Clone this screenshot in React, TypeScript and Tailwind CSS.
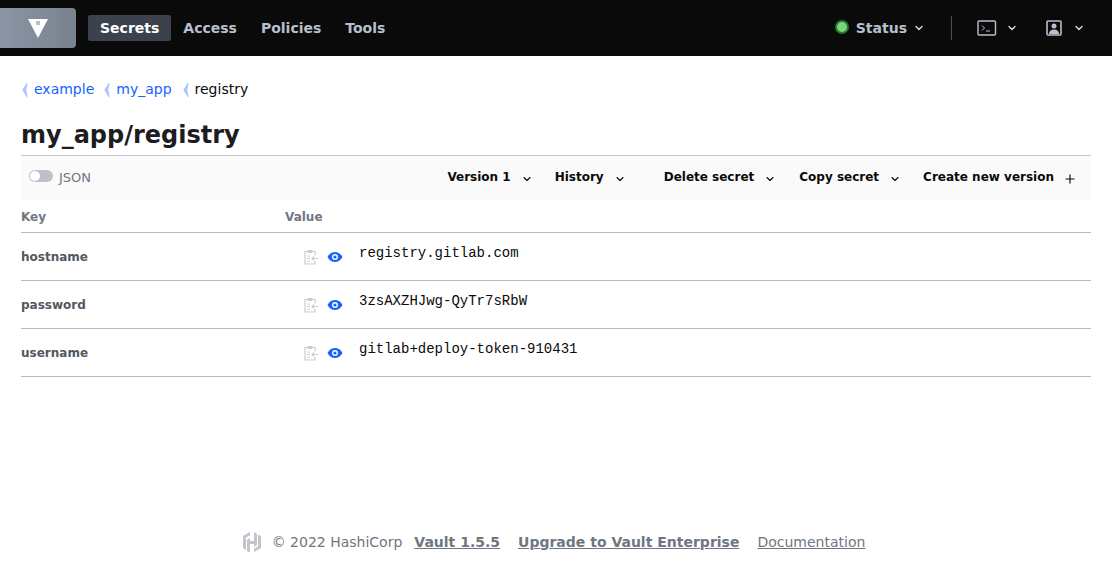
import React from "react";
import { ChevronDown, Plus } from "lucide-react";

const secrets = [
  { key: "hostname", value: "registry.gitlab.com" },
  { key: "password", value: "3zsAXZHJwg-QyTr7sRbW" },
  { key: "username", value: "gitlab+deploy-token-910431" },
];

const Crumb = () => (
  <svg width="8" height="16" viewBox="0 0 8 16" className="mr-[5px] mt-[2px] shrink-0">
    <path d="M6 1.500 L2 8 L6 14.500 L4.500 8 Z" fill="#a8c6fb" stroke="#a8c6fb" strokeWidth="1.200" strokeLinejoin="round" />
  </svg>
);

const ClipboardIcon = () => (
  <svg width="16" height="16" viewBox="0 0 16 16" fill="none" stroke="#c9ccd3" strokeWidth="1.200">
    <path d="M4.500 2.500H2v12.500h10v-3M12 6.500v-4H9.500" />
    <rect x="4.500" y="1" width="5" height="3" fill="#c9ccd3" stroke="none" />
    <path d="M4 7h3M4 9.500h3M4 12h3M9 9.500h6M11 7.500l-2 2 2 2" />
  </svg>
);

const EyeIcon = () => (
  <svg width="16" height="12" viewBox="0 0 16 12">
    <path d="M0.500 6C2.400 2.800 5 1 8 1s5.600 1.800 7.500 5c-1.900 3.200-4.500 5-7.500 5S2.400 9.200 0.500 6z" fill="#1563ff" />
    <circle cx="8" cy="6" r="3" fill="#fff" />
    <circle cx="8" cy="6" r="1.600" fill="#1563ff" />
  </svg>
);

const ToolbarAction = ({ label, className }: { label: string; className?: string }) => (
  <div className={`flex items-center text-xs font-bold text-[#0a0a0a] ${className ?? ""}`}>
    <span>{label}</span>
    <ChevronDown size={12} strokeWidth={2.2} className="ml-[10px] mt-[3px]" />
  </div>
);

export default function App() {
  return (
    <div className="h-[579px] w-full flex flex-col bg-white font-['DejaVu_Sans',sans-serif] overflow-hidden">
      <header className="h-14 shrink-0 bg-[#0a0a0a] flex items-center pr-[27px]">
        <div className="w-[76px] h-10 rounded-r bg-gradient-to-r from-[#8a95a5] to-[#78828f] flex items-center justify-center">
          <svg width="20" height="20" viewBox="0 0 20 20">
            <path d="M0 1h20L10 20z" fill="#fff" />
            <path d="M8 3h4v4H8z" fill="#b9bfc8" />
          </svg>
        </div>
        <nav className="ml-3 flex items-center text-sm font-bold text-[#b9bfcc]">
          <span className="h-[26px] px-3 flex items-center rounded-[2px] bg-[#3b424d] text-white">Secrets</span>
          <span className="ml-3">Access</span>
          <span className="ml-6">Policies</span>
          <span className="ml-6">Tools</span>
        </nav>
        <div className="ml-auto flex items-center text-[#b9bfcc]">
          <span className="w-2.5 h-2.5 mb-[3px] rounded-full bg-[#7ed47e] border-2 border-[#23792f] box-content" />
          <span className="ml-[7px] text-sm font-bold">Status</span>
          <ChevronDown size={12} strokeWidth={2.6} className="ml-1.5 text-[#dfe1e6]" />
          <div className="ml-[26px] w-px h-6 bg-[#4a4f58]" />
          <svg width="20" height="16" viewBox="0 0 20 16" fill="none" stroke="#b9bfcc" className="ml-[25px]">
            <rect x="1" y="1" width="17.500" height="14" rx="1" strokeWidth="1.400" />
            <path d="M5 5.500 7.500 8 5 10.500M9 11h4" strokeWidth="1" />
          </svg>
          <ChevronDown size={12} strokeWidth={2.6} className="ml-[9px] text-[#dfe1e6]" />
          <svg width="16" height="16" viewBox="0 0 16 16" className="ml-[28px]">
            <rect x="1" y="1" width="14" height="14" rx="1" fill="none" stroke="#b9bfcc" strokeWidth="1.600" />
            <circle cx="8" cy="6" r="2.500" fill="#b9bfcc" />
            <path d="M3 14c0-3 2-4.500 5-4.500s5 1.500 5 4.500z" fill="#b9bfcc" />
          </svg>
          <ChevronDown size={12} strokeWidth={2.6} className="ml-[11px] text-[#dfe1e6]" />
        </div>
      </header>

      <main className="flex-1 px-[21px] flex flex-col">
        <div className="mt-6 flex items-start h-[18px] text-sm leading-[18px]">
          <Crumb />
          <span className="text-[#1563ff]">example</span>
          <span className="ml-[9px]"><Crumb /></span>
          <span className="text-[#1563ff]">my_app</span>
          <span className="ml-[10px]"><Crumb /></span>
          <span className="text-[#0a0a0a]">registry</span>
        </div>

        <h1 className="mt-[22px] text-2xl leading-[30px] font-bold text-[#1d1d1f] h-[35px]">my_app/registry</h1>

        <div className="h-[45px] border-t border-[#c2c5cc] bg-[#fafafa] flex items-center pl-2 pr-[14px] pb-[2px]">
          <span className="w-6 h-3 mb-[2px] rounded-full bg-[#bac1cc] flex items-center pl-[1px]">
            <span className="w-2.5 h-2.5 rounded-full bg-white" />
          </span>
          <span className="ml-1.5 mt-[2px] text-[13px] text-[#6f7682]">JSON</span>
          <div className="ml-auto flex items-center">
            <ToolbarAction label="Version 1" />
            <ToolbarAction label="History" className="ml-[22px]" />
            <ToolbarAction label="Delete secret" className="ml-[38px]" />
            <ToolbarAction label="Copy secret" className="ml-[23px]" />
            <div className="ml-[22px] flex items-center text-xs font-bold text-[#0a0a0a]">
              <span>Create new version</span>
              <Plus size={14} strokeWidth={2} className="ml-[9px] mt-[3px]" />
            </div>
          </div>
        </div>

        <div className="h-[33px] border-b border-[#bbb8c4] flex items-center text-xs font-bold text-[#6f7682] pt-[1px]">
          <span className="w-[264px]">Key</span>
          <span>Value</span>
        </div>

        {secrets.map((s) => (
          <div key={s.key} className="h-12 border-b border-[#bbb8c4] flex items-start">
            <span className="w-[264px] mt-[16px] text-xs leading-4 font-bold text-[#525761]">{s.key}</span>
            <div className="ml-[18px] mt-[16px] flex items-center h-4">
              <ClipboardIcon />
              <span className="ml-[8px]"><EyeIcon /></span>
            </div>
            <span className="ml-[16px] mt-3 font-['Liberation_Mono',monospace] text-sm leading-4 text-[#0a0a0a]">{s.value}</span>
          </div>
        ))}

        <footer className="mt-auto h-[48px] flex items-start justify-center text-sm leading-5 text-[#6f7682] pr-[5px]">
          <div className="flex items-center">
            <svg width="20" height="22" viewBox="0 0 20 22" fill="#c2c5cc" className="mr-[10px]">
              <path d="M8 1 1 5v12l3 2V6.500L8 4.200zM12 1v9H8V7L5 8.700V20l3 1.500V13h4v3l3-1.700V3zM16 3.500V15.500L12 17.800V21l7-4V5z" />
            </svg>
            <span>© 2022 HashiCorp</span>
            <span className="ml-3 font-bold underline">Vault 1.5.5</span>
            <span className="ml-[18px] font-bold underline">Upgrade to Vault Enterprise</span>
            <span className="ml-[18px] underline">Documentation</span>
          </div>
        </footer>
      </main>
    </div>
  );
}
